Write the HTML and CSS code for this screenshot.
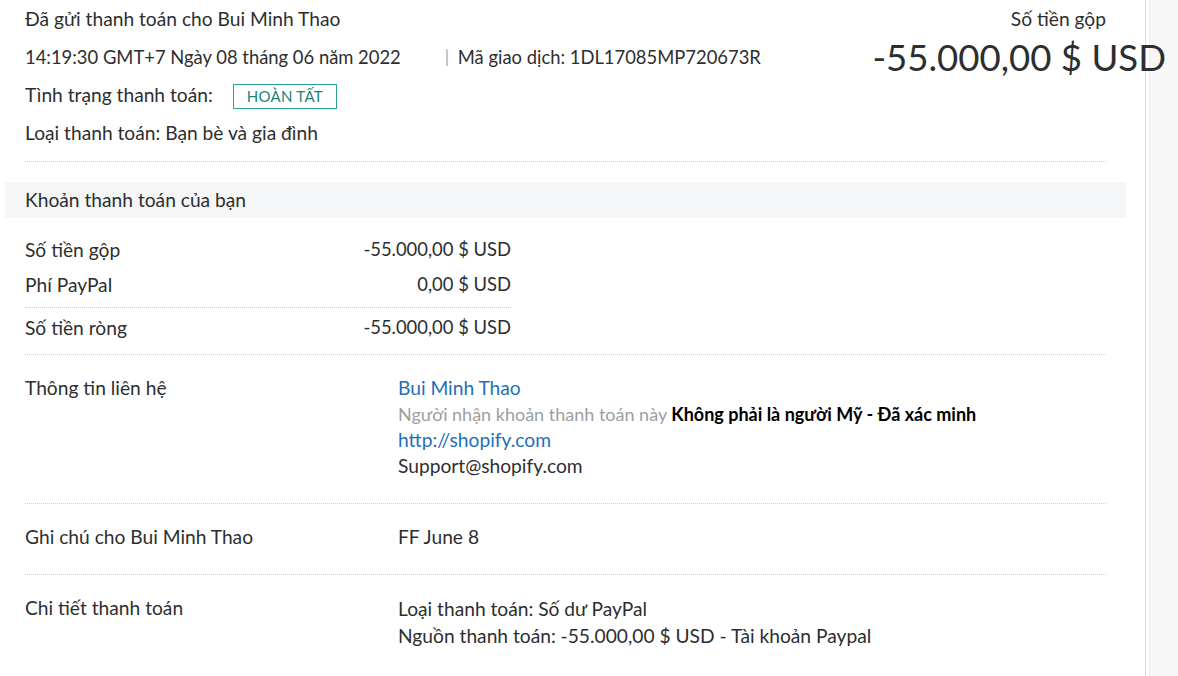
FILE: index.html
```html
<!DOCTYPE html>
<html lang="vi">
<head>
<meta charset="UTF-8">
<meta name="viewport" content="width=device-width, initial-scale=1.0">
<title>Chi tiết giao dịch</title>
<link rel="stylesheet" href="styles.css">
</head>
<body>

<div class="page">
    <div class="main">

        <div class="header">
            <div class="header-left">
                <div>Đã gửi thanh toán cho Bui Minh Thao</div>
                <div class="date-line">
                    <span>14:19:30 GMT+7 Ngày 08 tháng 06 năm 2022</span>
                    <span class="txn-id">Mã giao dịch: 1DL17085MP720673R</span>
                </div>
                <div>Tình trạng thanh toán: <span class="badge">HOÀN TẤT</span></div>
                <div>Loại thanh toán: Bạn bè và gia đình</div>
            </div>
            <div class="header-right">
                <div class="gross-label">Số tiền gộp</div>
                <div class="gross-amount">-55.000,00 $ USD</div>
            </div>
        </div>

        <div class="band">Khoản thanh toán của bạn</div>

        <div class="summary">
            <div class="summary-rows">
                <div class="summary-row">
                    <span>Số tiền gộp</span>
                    <span class="num">-55.000,00 $ USD</span>
                </div>
                <div class="summary-row">
                    <span>Phí PayPal</span>
                    <span class="num">0,00 $ USD</span>
                </div>
            </div>
            <div class="summary-row net">
                <span>Số tiền ròng</span>
                <span class="num">-55.000,00 $ USD</span>
            </div>
        </div>

        <div class="detail">
            <div class="detail-label">Thông tin liên hệ</div>
            <div class="detail-value">
                <div><a class="link" href="#">Bui Minh Thao</a></div>
                <div class="verify"><span class="muted">Người nhận khoản thanh toán này</span> <strong>Không phải là người Mỹ - Đã xác minh</strong></div>
                <div><a class="link" href="#">http://shopify.com</a></div>
                <div>Support@shopify.com</div>
            </div>
        </div>

        <div class="detail">
            <div class="detail-label">Ghi chú cho Bui Minh Thao</div>
            <div class="detail-value">
                <div>FF June 8</div>
            </div>
        </div>

        <div class="detail last">
            <div class="detail-label">Chi tiết thanh toán</div>
            <div class="detail-value tall">
                <div>Loại thanh toán: Số dư PayPal</div>
                <div>Nguồn thanh toán: -55.000,00 $ USD - Tài khoản Paypal</div>
            </div>
        </div>

    </div>
    <div class="side"></div>
</div>

</body>
</html>
```

FILE: styles.css
```css
body {
    margin: 0;
    font-family: Lato, "Open Sans", sans-serif;
    font-size: 19.2px;
    color: #2c2e2f;
    background-color: #fff;
    overflow: hidden;
}

.page {
    display: flex;
    min-height: 676px;
}

.main {
    width: 1121px;
    padding: 0 19px 0 5px;
    flex: none;
    position: relative;
    z-index: 1;
}

.side {
    flex: 1;
    background-color: #f7f7f7;
    border-left: 1px solid #dcdcdc;
    box-shadow: inset 3px 0 0 #fff, inset 4px 0 0 #ececec;
}

/* header */

.header {
    display: flex;
    justify-content: space-between;
    margin: 0 20px;
    padding-bottom: 9px;
    line-height: 38px;
    border-bottom: 1px dotted #cfcfcf;
}

.date-line {
    display: flex;
    font-size: 18.4px;
}

.txn-id {
    margin-left: 45px;
    padding-left: 12px;
    position: relative;
}

.txn-id::before {
    content: '';
    position: absolute;
    left: 0;
    top: 11px;
    height: 17px;
    border-left: 2px solid #c4c7c9;
}

.badge {
    display: inline-block;
    margin-left: 15px;
    padding: 0 13px;
    line-height: 23px;
    font-size: 15px;
    letter-spacing: 0.3px;
    color: #16867a;
    border: 1px solid #2aa396;
}

.header-right {
    text-align: right;
}

.gross-amount {
    margin-right: -60px;
    font-size: 36.6px;
    line-height: 38px;
    white-space: nowrap;
}

/* summary */

.band {
    margin-top: 20px;
    padding: 0 20px;
    line-height: 36px;
    background-color: #f5f6f8;
}

.summary {
    margin: 0 20px;
    padding-top: 14px;
    padding-bottom: 9px;
    border-bottom: 1px dotted #cfcfcf;
}

.summary-rows {
    width: 486px;
    padding-bottom: 5px;
    border-bottom: 1px dotted #cfcfcf;
}

.summary-row {
    width: 486px;
    display: flex;
    justify-content: space-between;
    line-height: 35px;
}

.summary-row.net {
    padding-top: 2px;
}

.num {
    font-size: 18.4px;
}

/* details */

.detail {
    display: flex;
    margin: 0 20px;
    padding: 20px 0 24px;
    line-height: 26px;
    border-bottom: 1px dotted #cfcfcf;
}

.detail.last {
    border-bottom: none;
}

.detail-label {
    width: 373px;
    flex: none;
}

.detail-value .link {
    color: #1e6fba;
    text-decoration: none;
}

.verify {
    font-size: 18px;
}

.muted {
    color: #9a9fa3;
}

strong {
    color: #000;
    font-weight: bold;
}

.tall {
    line-height: 27px;
}
```
